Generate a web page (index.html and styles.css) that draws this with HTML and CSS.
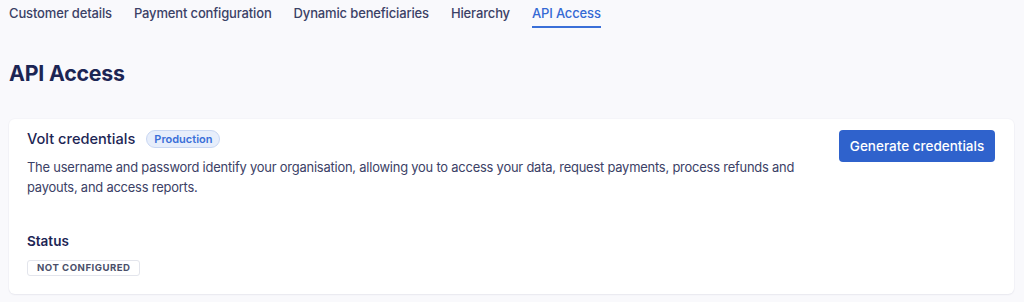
FILE: index.html
```html
<!DOCTYPE html>
<html>
<head>
<meta charset="utf-8">
<link rel="stylesheet" href="styles.css">
</head>
<body>
<div class="page">
  <nav class="tabs">
    <a class="tab">Customer details</a>
    <a class="tab">Payment configuration</a>
    <a class="tab">Dynamic beneficiaries</a>
    <a class="tab">Hierarchy</a>
    <a class="tab active">API Access</a>
  </nav>
  <h1 class="title">API Access</h1>
  <section class="card">
    <div class="card-main">
      <div class="card-head">
        <h2 class="card-title">Volt credentials</h2>
        <span class="env-badge">Production</span>
      </div>
      <p class="desc">The username and password identify your organisation, allowing you to access your data, request payments, process refunds and payouts, and access reports.</p>
      <h3 class="status-label">Status</h3>
      <span class="status-badge">NOT CONFIGURED</span>
    </div>
    <button class="btn-primary">Generate credentials</button>
  </section>
</div>
</body>
</html>
```
FILE: styles.css
```css
* { box-sizing: border-box; }
html, body { margin: 0; padding: 0; }
body {
  background: #f9f9fc;
  font-family: Inter, "Noto Sans", sans-serif;
  color: #1c2554;
  width: 1024px;
  height: 302px;
  overflow: hidden;
}
.page { padding: 0 10px 0 9px; }
.tabs {
  display: flex;
  gap: 22px;
  height: 28px;
  align-items: flex-start;
}
.tab {
  font-size: 13px;
  font-weight: 500;
  letter-spacing: -0.15px;
  color: #3b4166;
  padding-top: 5px;
  height: 28px;
  line-height: 16px;
  border-bottom: 2px solid transparent;
}
.tab.active {
  color: #3569d4;
  border-bottom-color: #3a6fd8;
}
.title {
  margin: 32px 0 0;
  font-size: 21.3px;
  font-weight: 700;
  line-height: 26px;
  color: #1c2554;
  letter-spacing: -0.2px;
}
.card {
  margin-top: 33px;
  background: #fff;
  border-radius: 6px;
  box-shadow: 0 1px 2px rgba(30, 40, 80, 0.06), 0 0 0 1px rgba(30, 40, 80, 0.02);
  padding: 10px 19px 17px 18px;
  display: flex;
  justify-content: space-between;
  align-items: flex-start;
  height: 175px;
}
.card-main { max-width: 790px; }
.card-head {
  display: flex;
  align-items: center;
  gap: 11px;
  height: 20px;
}
.card-title {
  margin: 0;
  font-size: 14.6px;
  font-weight: 500;
  color: #1c2554;
}
.env-badge {
  font-size: 11px;
  font-weight: 600;
  color: #3a6fd8;
  background: #e7eefb;
  border: 1px solid #c9d7f3;
  border-radius: 9px;
  padding: 0 7px;
  height: 18px;
  line-height: 16px;
}
.desc {
  margin: 9px 0 0;
  font-size: 12.9px;
  letter-spacing: -0.2px;
  line-height: 20px;
  color: #3b4166;
}
.status-label {
  margin: 34px 0 0;
  font-size: 13.5px;
  font-weight: 600;
  color: #1c2554;
  line-height: 18px;
}
.status-badge {
  display: inline-block;
  margin-top: 10px;
  font-size: 9.6px;
  font-weight: 700;
  letter-spacing: 0.5px;
  color: #4a4f6a;
  border: 1px solid #e3e5ec;
  border-radius: 3px;
  height: 16px;
  line-height: 14px;
  padding: 0 9px;
}
.btn-primary {
  margin-top: 1px;
  background: #2f62cc;
  color: #fff;
  border: none;
  border-radius: 4px;
  width: 156px;
  height: 32px;
  font-family: inherit;
  font-size: 13.5px;
  font-weight: 500;
}
```
